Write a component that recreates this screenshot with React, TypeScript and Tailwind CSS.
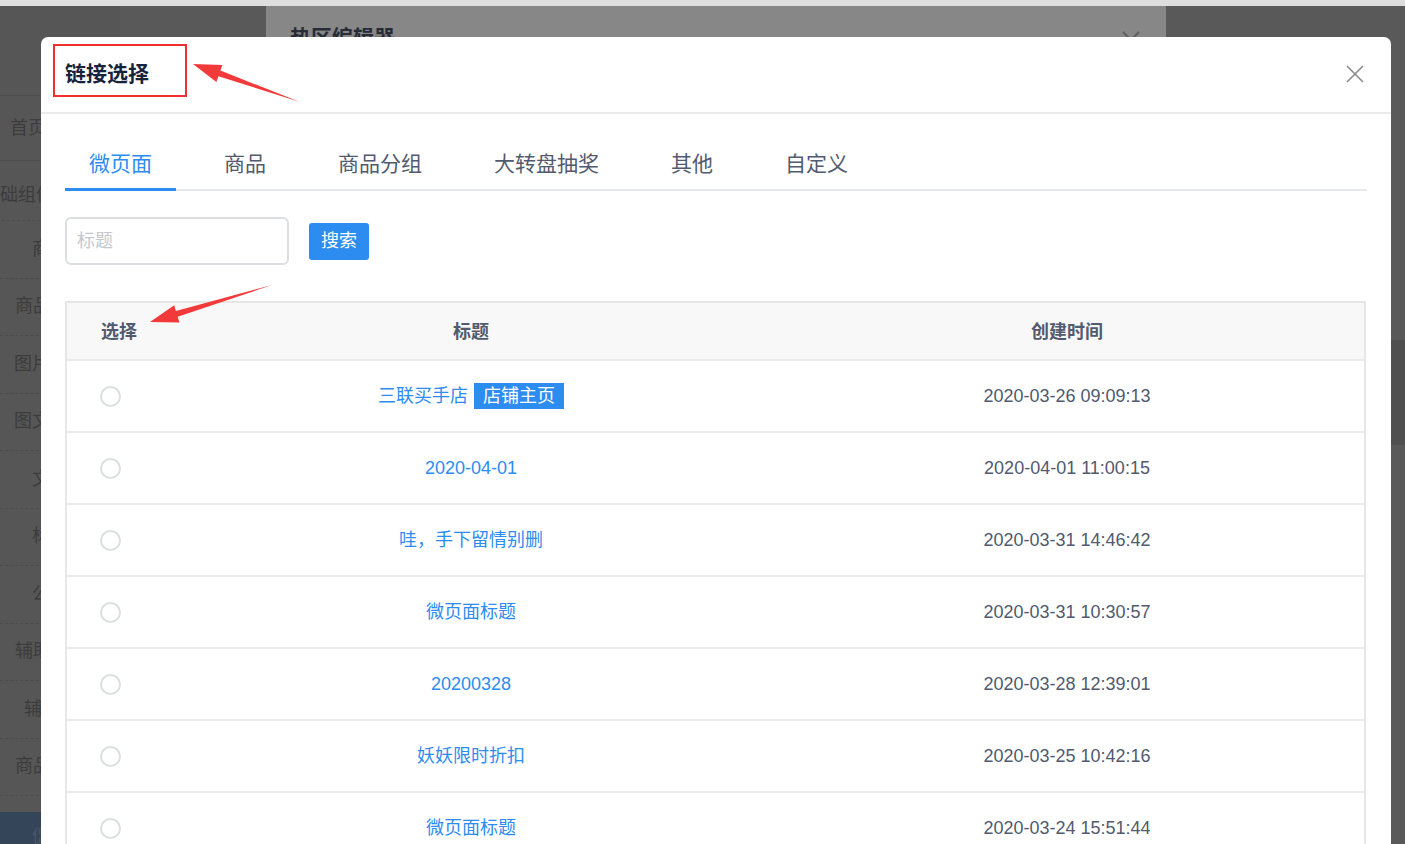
import React from "react";

const font = { fontFamily: '"Liberation Sans", Arial, "Noto Sans CJK SC", sans-serif' };

const tabs = ["微页面", "商品", "商品分组", "大转盘抽奖", "其他", "自定义"];

const rows = [
  { title: "三联买手店", tag: "店铺主页", time: "2020-03-26 09:09:13" },
  { title: "2020-04-01", time: "2020-04-01 11:00:15" },
  { title: "哇，手下留情别删", time: "2020-03-31 14:46:42" },
  { title: "微页面标题", time: "2020-03-31 10:30:57" },
  { title: "20200328", time: "2020-03-28 12:39:01" },
  { title: "妖妖限时折扣", time: "2020-03-25 10:42:16" },
  { title: "微页面标题", time: "2020-03-24 15:51:44" },
];

const sideItems = [
  { text: "商", pl: "pl-[32px]" },
  { text: "商品", pl: "pl-[15px]" },
  { text: "图片", pl: "pl-[14px]" },
  { text: "图文", pl: "pl-[14px]" },
  { text: "文", pl: "pl-[32px]" },
  { text: "标", pl: "pl-[32px]" },
  { text: "公", pl: "pl-[32px]" },
  { text: "辅助", pl: "pl-[15px]" },
  { text: "辅", pl: "pl-[24px]" },
  { text: "商品", pl: "pl-[15px]" },
];

function Sidebar() {
  return (
    <div className="flex flex-col w-[120px] text-[18px] text-[#3c3c3c]">
      <div className="h-[89px]" />
      <div className="h-[66px] flex items-center pl-[10px] border-y border-[#4e4e4e]">首页</div>
      <div className="h-[60px] flex items-end pb-[11px] -ml-[18px] border-b border-dashed border-[#4c4c4c]">基础组件</div>
      {sideItems.map((s, i) => (
        <div
          key={i}
          className={`h-[57.5px] flex items-center ${s.pl} border-b border-dashed border-[#4c4c4c]`}
        >
          {s.text}
        </div>
      ))}
      <div className="h-[16px]" />
      <div className="h-[60px] bg-[#34455a] flex items-start pt-[12px] pl-[32px] text-[#4a5566]">促</div>
    </div>
  );
}

function Arrow({ points }: { points: string }) {
  return <polygon points={points} fill="#f23a3a" />;
}

export default function App() {
  return (
    <div className="relative w-[1405px] h-[844px] overflow-hidden bg-[#595959]" style={font}>
      {/* page under the mask */}
      <div className="h-[6px] bg-[#dedede]" />
      <div className="absolute left-0 top-[6px] bottom-0 bg-[#565656]">
        <Sidebar />
      </div>
      <div className="absolute right-0 top-[340px] w-[14px] h-[105px] bg-[#4f4f4f]" />

      {/* hot area editor behind */}
      <div className="absolute left-[266px] top-[6px] w-[900px] h-[200px] bg-[#878787]">
        <div className="pl-[24px] pt-[16px] text-[21px] font-bold text-[#262b36]">热区编辑器</div>
        <svg className="absolute left-[855px] top-[24px]" width="20" height="20" viewBox="0 0 20 20">
          <path d="M2 2 L18 18 M18 2 L2 18" stroke="#5f5f5f" strokeWidth="2" />
        </svg>
      </div>

      {/* link modal */}
      <div className="absolute left-[41px] top-[37px] w-[1350px] h-[820px] bg-white rounded-t-[7px]">
        <div className="h-[77px] flex items-center justify-between px-[24px] border-b-2 border-[#ebebeb]">
          <div className="text-[21px] font-bold text-[#17233d] -mt-[2px]">链接选择</div>
          <svg width="20" height="20" viewBox="0 0 20 20" className="mr-[2px] -mt-[2px]">
            <path d="M2 2 L18 18 M18 2 L2 18" stroke="#8a8a8a" strokeWidth="1.6" />
          </svg>
        </div>

        <div className="px-[24px]">
          <div className="mt-[24px] flex gap-[24px] border-b-2 border-[#e4e7ed]">
            {tabs.map((t, i) => (
              <div
                key={t}
                className={`relative h-[51px] flex items-center pt-[1px] px-[24px] text-[21px] ${
                  i === 0 ? "text-[#2d8cf0]" : "text-[#515a6e]"
                }`}
              >
                {t}
                {i === 0 && <div className="absolute left-0 right-0 -bottom-[2px] h-[3px] bg-[#2d8cf0]" />}
              </div>
            ))}
          </div>

          <div className="mt-[26px] flex items-center">
            <div className="w-[224px] h-[48px] border-2 border-[#dcdee2] rounded-[6px] flex items-center px-[10px] text-[18px] text-[#c5c8ce]">
              标题
            </div>
            <button className="ml-[20px] w-[60px] h-[37px] bg-[#2d8cf0] rounded-[3px] text-white text-[18px]">
              搜索
            </button>
          </div>

          <div className="mt-[36px] w-[1301px] border-2 border-b-0 border-[#e6e6e6]">
            <div className="grid grid-cols-[105px_598px_594px] h-[58px] bg-[#f8f8f9] border-b-2 border-[#e8eaec] text-[18px] font-bold text-[#515a6e]">
              <div className="flex items-center pt-[2px] pl-[34px]">选择</div>
              <div className="flex items-center pt-[2px] justify-center">标题</div>
              <div className="flex items-center pt-[2px] justify-center">创建时间</div>
            </div>
            {rows.map((r, i) => (
              <div
                key={i}
                className="grid grid-cols-[105px_598px_594px] h-[72px] border-b-2 border-[#e8eaec] text-[18px]"
              >
                <div className="flex items-center pl-[33px]">
                  <span className="w-[21px] h-[21px] rounded-full border-2 border-[#dcdee2] bg-white" />
                </div>
                <div className="flex items-center justify-center text-[#2d8cf0]">
                  {r.title}
                  {r.tag && (
                    <span className="ml-[6px] h-[26px] px-[9px] flex items-center bg-[#2d8cf0] text-white">
                      {r.tag}
                    </span>
                  )}
                </div>
                <div className="flex items-center justify-center text-[#515a6e]">{r.time}</div>
              </div>
            ))}
          </div>
        </div>
      </div>

      {/* annotations */}
      <div className="absolute left-[53px] top-[44px] w-[134px] h-[53px] border-2 border-[#f0302f]" />
      <svg className="absolute left-0 top-0 pointer-events-none" width="1405" height="844">
        <Arrow points="193,64 222.4,64.9 220.4,70.6 300,102 218.4,76.2 216.4,81.9" />
        <Arrow points="150,322 174.2,305.3 175.9,311 272,285 177.7,316.8 179.4,322.5" />
      </svg>
    </div>
  );
}
